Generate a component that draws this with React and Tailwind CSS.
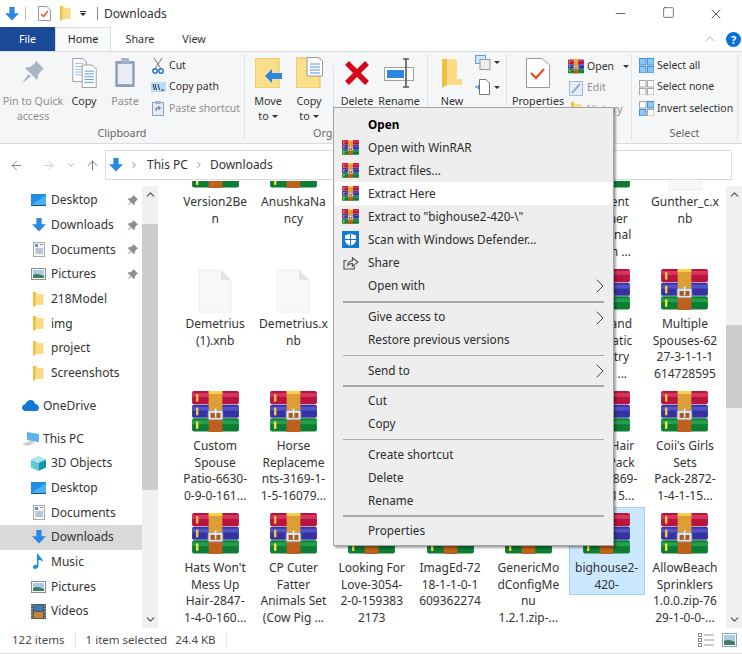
import { ChevronDown, ChevronRight, ChevronUp, ArrowLeft, ArrowRight, ArrowUp, Minus, Square, X } from 'lucide-react';

const RarIcon = ({ className }) => (
  <svg viewBox="0 0 48 42" className={className}>
    <rect x="0" y="0" width="48" height="13.5" rx="2" fill="#b9143f" />
    <rect x="0" y="14" width="48" height="13.5" rx="2" fill="#35339f" />
    <rect x="0" y="28" width="48" height="13.5" rx="2" fill="#0c7d33" />
    <rect x="0" y="2" width="48" height="4" fill="#e0446a" opacity=".7" />
    <rect x="0" y="16" width="48" height="4" fill="#5f5fdc" opacity=".7" />
    <rect x="0" y="30" width="48" height="4" fill="#2fae56" opacity=".7" />
    <rect x="4" y="3" width="2.5" height="8" rx="1" fill="#f5c542" />
    <rect x="4" y="17" width="2.5" height="8" rx="1" fill="#f5c542" />
    <rect x="4" y="31" width="2.5" height="8" rx="1" fill="#f5e042" />
    <rect x="17" y="0" width="14" height="21" fill="#dd9f35" />
    <rect x="17" y="0" width="14" height="3" fill="#f3d24e" />
    <rect x="17" y="21" width="14" height="21" fill="#bf601c" />
    <rect x="16.5" y="20" width="15" height="9.5" rx="1.5" fill="#dfe3e8" stroke="#9aa0a8" strokeWidth=".8" />
    <rect x="19" y="22.5" width="10" height="5" fill="#a85a1a" />
    <rect x="23.3" y="18" width="1.6" height="9" fill="#f2f2f2" />
  </svg>
);

const BlankDoc = () => (
  <svg viewBox="0 0 34 44" className="w-[34px] h-[44px]">
    <path d="M1 1H23L33 11V43H1Z" fill="#f8f8f8" stroke="#eeeeee" />
    <path d="M23 1V11H33Z" fill="#e3e3e3" />
  </svg>
);

const DownArrow = ({ className }) => (
  <svg viewBox="0 0 16 16" className={className}>
    <path d="M5 0H11V7H16L8 15.5L0 7H5Z" fill="#2b87e3" />
  </svg>
);

const SideFolder = ({ className }) => (
  <svg viewBox="0 0 11 15" className={className}>
    <path d="M0 0H3L5 2H10.5V13H3L0 15Z" fill="#fbdc86" />
    <path d="M0 0H2.5V13.5L0 15Z" fill="#efbe45" />
  </svg>
);

const PinSmall = () => (
  <svg viewBox="0 0 12 12" className="w-[11px] h-[11px]">
    <path d="M7 0L12 5L10.5 5.8L8.5 8.5V10.5L7.5 11L1 4.5L1.5 3.5H3.5L6.2 1.5ZM3.5 7.5L0 12L4.5 8.5Z" fill="#8f8f8f" />
  </svg>
);

const NavIcon = ({ kind }) => {
  if (kind === 'desktop')
    return (
      <svg viewBox="0 0 15 12" className="w-[15px] h-[12px]">
        <rect width="15" height="11" fill="#1b8fe8" />
        <path d="M0 11L15 1V11Z" fill="#49aef2" />
        <rect y="11" width="15" height="1" fill="#0d4f91" />
      </svg>
    );
  if (kind === 'downloads') return <DownArrow className="w-[14px] h-[14px]" />;
  if (kind === 'documents')
    return (
      <svg viewBox="0 0 12 15" className="w-[12px] h-[15px]">
        <rect x=".5" y=".5" width="11" height="14" fill="#f5f5f5" stroke="#a8a8a8" />
        <path d="M2.5 4H5M7 2.5H10M2.5 7H10M2.5 9H10M2.5 11H10" stroke="#7d95b0" />
        <rect x="2" y="2" width="3" height="3" fill="#4a9ad8" />
      </svg>
    );
  if (kind === 'pictures')
    return (
      <svg viewBox="0 0 15 12" className="w-[15px] h-[12px]">
        <rect x=".5" y=".5" width="14" height="11" fill="#fff" stroke="#8e8e8e" />
        <rect x="2" y="2" width="11" height="8" fill="#a9cde8" />
        <path d="M2 10V7C5 5 9 6 13 8V10Z" fill="#3f7d5c" />
      </svg>
    );
  if (kind === 'folder') return <SideFolder className="w-[11px] h-[15px]" />;
  if (kind === 'cloud')
    return (
      <svg viewBox="0 0 17 11" className="w-[17px] h-[11px]">
        <path d="M4 11C1 11 0 9 0 7.5C0 5.5 2 4.5 3 4.5C4 1.5 6.5 0 8.5 0C11 0 13 2 13 4C15.5 4 17 6 17 8C17 10 15.5 11 14 11Z" fill="#0f78d4" />
      </svg>
    );
  if (kind === 'pc')
    return (
      <svg viewBox="0 0 18 14" className="w-[18px] h-[14px]">
        <path d="M5 0L17 2V10L5 8Z" fill="#5fb1e8" />
        <path d="M0 12L9 9L14 10L6 14Z" fill="#c9ced4" />
      </svg>
    );
  if (kind === 'cube')
    return (
      <svg viewBox="0 0 15 15" className="w-[15px] h-[15px]">
        <path d="M7.5 0L15 3.5L7.5 7L0 3.5Z" fill="#a5e6ef" />
        <path d="M0 3.5L7.5 7V15L0 11.5Z" fill="#5cc9d8" />
        <path d="M15 3.5L7.5 7V15L15 11.5Z" fill="#1597ab" />
      </svg>
    );
  if (kind === 'music')
    return (
      <svg viewBox="0 0 11 15" className="w-[11px] h-[15px]">
        <path d="M4 0H5.5C6 3 10 4 10 8C9 6.5 7 6 5.5 6V12C5.5 14 3.5 15 2 15C.5 15 0 14 0 13C0 11.5 2 10.5 4 11Z" fill="#1b8fe8" />
      </svg>
    );
  return (
    <svg viewBox="0 0 15 15" className="w-[15px] h-[15px]">
      <rect width="15" height="15" fill="#555" />
      <rect x="3" y="1" width="9" height="6" fill="#3d77b5" />
      <rect x="3" y="8" width="9" height="6" fill="#c8862e" />
      <path d="M1 1V14M14 1V14" stroke="#ddd" strokeDasharray="1.5 1.5" />
    </svg>
  );
};

const QUICK = [
  { icon: 'desktop', label: 'Desktop', pin: true },
  { icon: 'downloads', label: 'Downloads', pin: true },
  { icon: 'documents', label: 'Documents', pin: true },
  { icon: 'pictures', label: 'Pictures', pin: true },
  { icon: 'folder', label: '218Model' },
  { icon: 'folder', label: 'img' },
  { icon: 'folder', label: 'project' },
  { icon: 'folder', label: 'Screenshots' },
];

const PC = [
  { icon: 'cube', label: '3D Objects' },
  { icon: 'desktop', label: 'Desktop' },
  { icon: 'documents', label: 'Documents' },
  { icon: 'downloads', label: 'Downloads', active: true },
  { icon: 'music', label: 'Music' },
  { icon: 'pictures', label: 'Pictures' },
  { icon: 'video', label: 'Videos' },
];

const NavRow = ({ icon, label, pin, active }) => (
  <div className={`relative flex items-center h-[24.7px] pl-[31px] ${active ? 'bg-[#d9d9d9]' : ''}`}>
    <span className="w-[15px] flex justify-center shrink-0"><NavIcon kind={icon} /></span>
    <span className="ml-[5px]">{label}</span>
    {pin && <span className="absolute left-[127px] top-[7px]"><PinSmall /></span>}
  </div>
);

const Scrollbar = ({ thumbTop, thumbHeight, className }) => (
  <div className={`relative w-[16px] bg-[#f0f0f0] flex flex-col justify-between items-center py-[2px] text-[#555] ${className}`}>
    <ChevronUp size={13} strokeWidth={2.2} />
    <div className="absolute left-0 w-[16px] bg-[#cdcdcd]" style={{ top: thumbTop, height: thumbHeight }} />
    <ChevronDown size={13} strokeWidth={2.2} />
  </div>
);

const FILES = [
  { kind: 'rar', lines: ['Version2Be', 'n'] },
  { kind: 'rar', lines: ['AnushkaNa', 'ncy'] },
  { kind: 'rar', lines: [] },
  { kind: 'rar', lines: [] },
  { kind: 'rar', lines: [] },
  { kind: 'rar', lines: ['Content', 'Partner', 'Personal', 'Ocean ...'] },
  { kind: 'doc', lines: ['Gunther_c.x', 'nb'] },
  { kind: 'doc', lines: ['Demetrius', '(1).xnb'] },
  { kind: 'doc', lines: ['Demetrius.x', 'nb'] },
  { kind: 'rar', lines: [] },
  { kind: 'rar', lines: [] },
  { kind: 'rar', lines: [] },
  { kind: 'rar', lines: ['Husband', 'Dramatic', 'Country', 'Lore  ...'] },
  { kind: 'rar', lines: ['Multiple', 'Spouses-62', '27-3-1-1-1', '614728595'] },
  { kind: 'rar', lines: ['Custom', 'Spouse', 'Patio-6630-', '0-9-0-161...'] },
  { kind: 'rar', lines: ['Horse', 'Replaceme', 'nts-3169-1-', '1-5-16079...'] },
  { kind: 'rar', lines: [] },
  { kind: 'rar', lines: [] },
  { kind: 'rar', lines: [] },
  { kind: 'rar', lines: ['Long Hair', 'Style Pack', 'Pack-2869-', '1-4-0-15...'] },
  { kind: 'rar', lines: ["Coii's Girls", 'Sets', 'Pack-2872-', '1-4-1-15...'] },
  { kind: 'rar', lines: ["Hats Won't", 'Mess Up', 'Hair-2847-', '1-4-0-160...'] },
  { kind: 'rar', lines: ['CP Cuter', 'Fatter', 'Animals Set', '(Cow Pig ...'] },
  { kind: 'rar', lines: ['Looking For', 'Love-3054-', '2-0-159383', '2173'] },
  { kind: 'rar', lines: ['ImagEd-72', '18-1-1-0-1', '609362274'] },
  { kind: 'rar', lines: ['GenericMo', 'dConfigMe', 'nu', '1.2.1.zip-...'] },
  { kind: 'rar', lines: ['bighouse2-', '420-'], selected: true },
  { kind: 'rar', lines: ['AllowBeach', 'Sprinklers', '1.0.0.zip-76', '29-1-0-0-...'] },
];

const FileTile = ({ kind, lines, selected }) => (
  <div className="h-[122px] pt-[1px]">
    <div className={`w-[76px] mx-auto text-center leading-[16.5px] border ${selected ? 'h-[88px] bg-[#cce8ff] border-[#99d1ff]' : 'border-transparent'}`}>
      <div className="h-[52px] pt-[5px] flex justify-center">
        {kind === 'rar' ? <RarIcon className="w-[47px] h-[41px]" /> : <BlankDoc />}
      </div>
      {lines.map((line, i) => <div key={i} className="whitespace-pre">{line}</div>)}
    </div>
  </div>
);

const Big = ({ w, label, sub, dim, icon }) => (
  <div className={`shrink-0 flex flex-col items-center text-center leading-[14.5px] ${dim ? 'text-[#8f8f8f]' : ''}`} style={{ width: w }}>
    <div className="h-[32px] mt-[2px] mb-[6px] flex items-end justify-center">{icon}</div>
    <div className="whitespace-nowrap">{label}</div>
    {sub && <div className="whitespace-nowrap">{sub}</div>}
  </div>
);

const Small = ({ icon, label, dim, caret }) => (
  <div className={`flex items-center h-[21.5px] whitespace-nowrap text-[10.5px] ${dim ? 'text-[#8f8f8f]' : ''}`}>
    <span className="w-[16px] h-[16px] flex items-center justify-center shrink-0">{icon}</span>
    <span className="ml-[3px]">{label}</span>
    {caret && <span className="ml-[9px] border-x-[3px] border-t-[3px] border-x-transparent border-t-[#333]" />}
  </div>
);

const Group = ({ w, label, children }) => (
  <div className="shrink-0 flex flex-col border-r border-[#e2e4e7] my-[2px]" style={{ width: w }}>
    <div className="flex h-[72px]">{children}</div>
    <div className="text-center text-[#666] leading-[15px]">{label}</div>
  </div>
);

const Caret = () => <span className="inline-block align-middle ml-[3px] border-x-[3px] border-t-[3px] border-x-transparent border-t-[#333]" />;

const DocsIcon = () => (
  <svg viewBox="0 0 26 32" className="w-[25px] h-[30px]">
    <path d="M.5 .5H11L15 4V25H.5Z" fill="#fff" stroke="#9a9a9a" />
    <path d="M3 6H12M3 9H12M3 12H12M3 15H12M3 18H12" stroke="#8db9ee" />
    <path d="M10.5 7.5H21L25.5 11.5V31.5H10.5Z" fill="#fff" stroke="#9a9a9a" />
    <path d="M13 14H23M13 17H23M13 20H23M13 23H23M13 26H23" stroke="#4f94e8" />
  </svg>
);

const BoardIcon = () => (
  <svg viewBox="0 0 22 31" className="w-[22px] h-[30px]">
    <rect x="1" y="3" width="20" height="27" rx="1" fill="#8d9dbb" />
    <rect x="3.5" y="6" width="15" height="21" fill="#e9eef6" />
    <rect x="7" y="0" width="8" height="5" rx="1" fill="#a9b4c8" />
  </svg>
);

const SelectIcon = ({ on }) => (
  <svg viewBox="0 0 15 15" className="w-[15px] h-[15px]">
    {[[0, 0], [8, 0], [0, 8], [8, 8]].map(([x, y], i) => (
      <rect key={i} x={x + .5} y={y + .5} width="6.5" height="6.5" fill={on[i] ? '#8cc6f2' : '#fff'} stroke={on[i] ? '#3f93d9' : '#a5a5a5'} />
    ))}
  </svg>
);

const MenuItem = ({ icon, label, bold, arrow, hot }) => (
  <div className={`relative flex items-center h-[23px] pl-[7px] ${hot ? 'bg-white' : ''} ${bold ? 'font-bold text-black' : ''}`}>
    <span className="w-[17px] h-[17px] mr-[9px] flex items-center justify-center shrink-0">{icon}</span>
    <span>{label}</span>
    {arrow && <ChevronRight size={24} strokeWidth={1} className="absolute right-0 top-0 text-[#444]" />}
  </div>
);

const Sep = () => <div className="h-[7.5px] flex items-center px-[8px]"><div className="w-full h-[1.5px] bg-[#a8a8a8]" /></div>;

const rar = <RarIcon className="w-[17px] h-[15px]" />;

const ContextMenu = () => (
  <div className="absolute left-[333px] top-[107px] w-[281px] h-[439px] pt-[5px] px-[1px] bg-[#eeeeee] border border-[#a3a3a3] shadow-[2px_2px_2px_rgba(0,0,0,0.35)] text-[11.75px] text-[#2b2b2b] font-['Noto_Sans',sans-serif]">
    <MenuItem label="Open" bold />
    <MenuItem icon={rar} label="Open with WinRAR" />
    <MenuItem icon={rar} label="Extract files..." />
    <MenuItem icon={rar} label="Extract Here" hot />
    <MenuItem icon={rar} label={'Extract to "bighouse2-420-\\"'} />
    <MenuItem
      icon={
        <svg viewBox="0 0 17 17" className="w-[17px] h-[17px]">
          <rect width="17" height="17" fill="#0f78d4" />
          <path d="M8.5 2.5L14 4.5V9C14 12 11 14 8.5 15C6 14 3 12 3 9V4.5Z" fill="#fff" />
          <path d="M8.5 2.5V15M3 8.5H14" stroke="#0f78d4" />
        </svg>
      }
      label="Scan with Windows Defender..."
    />
    <MenuItem
      icon={
        <svg viewBox="0 0 17 15" className="w-[16px] h-[14px]" fill="none" stroke="#444" strokeWidth="1.1">
          <path d="M4 5H1V14H12V11" />
          <path d="M5 10C5 7 8 5 10 5V2L16 6.5L10 11V8C8 8 6 8.5 5 10Z" />
        </svg>
      }
      label="Share"
    />
    <MenuItem label="Open with" arrow />
    <div className="h-px" />
    <Sep />
    <MenuItem label="Give access to" arrow />
    <MenuItem label="Restore previous versions" />
    <Sep />
    <MenuItem label="Send to" arrow />
    <Sep />
    <MenuItem label="Cut" />
    <MenuItem label="Copy" />
    <Sep />
    <MenuItem label="Create shortcut" />
    <MenuItem label="Delete" />
    <MenuItem label="Rename" />
    <Sep />
    <MenuItem label="Properties" />
  </div>
);

export default function App() {
  return (
    <div className="relative w-[742px] h-[654px] overflow-hidden bg-white flex flex-col text-[12px] text-[#333] font-['Noto_Sans',sans-serif]">
      {/* Title bar */}
      <div className="h-[27px] flex items-center shrink-0">
        <DownArrow className="ml-[5px] w-[14px] h-[14px]" />
        <div className="ml-[6px] w-px h-[13px] bg-[#bbb]" />
        <svg viewBox="0 0 13 15" className="ml-[12px] w-[13px] h-[15px]">
          <path d="M.5 .5H9L12.5 4V14.5H.5Z" fill="#fff" stroke="#999" />
          <path d="M3 8L5.5 10.5L10 5" fill="none" stroke="#e0562a" strokeWidth="1.5" />
        </svg>
        <SideFolder className="ml-[9px] w-[11px] h-[15px]" />
        <div className="ml-[9px] flex flex-col items-center gap-[1px]">
          <div className="w-[6px] h-px bg-[#333]" />
          <div className="border-x-[3px] border-t-[3px] border-x-transparent border-t-[#333]" />
        </div>
        <div className="ml-[11px] w-px h-[13px] bg-[#888]" />
        <div className="ml-[6px]">Downloads</div>
        <div className="ml-auto flex text-[#333]">
          <div className="w-[48px] flex justify-center"><Minus size={15} strokeWidth={1.2} /></div>
          <div className="w-[48px] flex justify-center"><Square size={13} strokeWidth={1.2} /></div>
          <div className="w-[48px] mr-[2px] flex justify-center"><X size={16} strokeWidth={1.2} /></div>
        </div>
      </div>

      {/* Tabs */}
      <div className="relative h-[24px] flex items-stretch shrink-0 text-[10.75px]">
        <div className="w-[55px] bg-[#1a4a96] text-white flex items-center justify-center">File</div>
        <div className="w-[56px] flex items-center justify-center border-x border-t border-[#dadbdc] text-[#222] relative z-10 bg-[#f9fafa]">Home</div>
        <div className="w-[58px] flex items-center justify-center">Share</div>
        <div className="w-[50px] flex items-center justify-center">View</div>
        <div className="ml-auto flex items-center mr-[1px]">
          <ChevronUp size={16} strokeWidth={1} className="text-[#999] mr-[8px]" />
          <div className="w-[15px] h-[15px] rounded-full bg-[#0a6fd6] text-white font-bold text-[11px] leading-[15px] text-center">?</div>
        </div>
      </div>

      {/* Ribbon */}
      <div className="h-[93px] bg-[#f5f6f7] border-y border-[#dadbdc] flex shrink-0 text-[10.75px]">
        <Group w={245} label="Clipboard">
          <div className="w-[5px] shrink-0" />
          <Big w={56} dim label="Pin to Quick" sub="access" icon={
            <svg viewBox="0 0 22 22" className="w-[22px] h-[22px] mb-[5px]">
              <path d="M14 0L22 8L19.5 9.5L16 14V17.5L14.5 18.5L3.5 7.5L4.5 6H8L12.5 2.5ZM6.5 13L0 22L9 15.5Z" fill="#aab5c3" />
            </svg>
          } />
          <Big w={46} label="Copy" icon={<DocsIcon />} />
          <Big w={36} dim label="Paste" icon={<BoardIcon />} />
          <div className="ml-[7px] pt-[1px]">
            <Small label="Cut" icon={
              <svg viewBox="0 0 12 16" className="w-[12px] h-[16px]" fill="none">
                <path d="M2 0L8.5 10M10 0L3.5 10" stroke="#777" />
                <circle cx="3" cy="13" r="2.2" stroke="#1f6fc4" strokeWidth="1.4" />
                <circle cx="9" cy="13" r="2.2" stroke="#1f6fc4" strokeWidth="1.4" />
              </svg>
            } />
            <Small label="Copy path" icon={
              <svg viewBox="0 0 15 10" className="w-[15px] h-[10px]">
                <rect width="15" height="10" fill="#bcdcf5" />
                <path d="M2 2L3.5 8M4 2L5.5 8M7 2L8.5 8M10 8H13" stroke="#334" />
              </svg>
            } />
            <Small dim label="Paste shortcut" icon={
              <svg viewBox="0 0 12 15" className="w-[12px] h-[15px]">
                <rect x=".5" y="1.5" width="11" height="13" fill="#e4ebf4" stroke="#8ea0bd" />
                <rect x="3.5" y="0" width="5" height="3" fill="#9fb0c8" />
                <path d="M4 10V7H8M6 5L8.5 7L6 9" fill="none" stroke="#5b6f8c" />
              </svg>
            } />
          </div>
        </Group>
        <Group w={183} label="Organize">
          <Big w={46} label="Move" sub={<>to<Caret /></>} icon={
            <svg viewBox="0 0 27 30" className="w-[27px] h-[30px]">
              <rect x="0" y="0" width="24" height="30" fill="#fcdf8c" stroke="#eabc4a" />
              <path d="M27 15H17V11L10 18L17 25V21H27Z" fill="#2b87e3" />
            </svg>
          } />
          <Big w={36} label="Copy" sub={<>to<Caret /></>} icon={
            <svg viewBox="0 0 27 31" className="w-[27px] h-[31px]">
              <rect x="0" y="1" width="24" height="30" fill="#fcdf8c" stroke="#eabc4a" />
              <path d="M11 .5H22L26.5 4V19H11Z" fill="#fff" stroke="#999" />
              <path d="M14 7H24M14 10H24M14 13H24M14 16H24" stroke="#4f94e8" />
            </svg>
          } />
          <div className="ml-[6px] mr-[3px] mt-[12px] mb-[4px] w-px bg-[#e2e4e7] shrink-0" />
          <Big w={40} label="Delete" icon={
            <svg viewBox="0 0 26 26" className="w-[26px] h-[26px] mb-[2px]">
              <path d="M3 3L23 23M23 3L3 23" stroke="#d3071c" strokeWidth="5.5" />
            </svg>
          } />
          <Big w={44} label="Rename" icon={
            <svg viewBox="0 0 30 30" className="w-[30px] h-[30px]" fill="none">
              <rect x=".5" y="9.5" width="29" height="13" fill="#fff" stroke="#a0a0a0" />
              <rect x="3" y="12" width="17" height="8" fill="#2b87e3" />
              <path d="M19 1H25M19 29H25M22 1V29" stroke="#555" strokeWidth="1.6" />
            </svg>
          } />
        </Group>
        <Group w={79} label="">
          <Big w={48} label="New" icon={
            <svg viewBox="0 0 20 29" className="w-[20px] h-[29px]">
              <path d="M0 0H13L15 2V20H20V26L5 26L0 29Z" fill="#fcdc82" />
              <path d="M0 0H5V26L0 29Z" fill="#efbe45" />
            </svg>
          } />
          <div className="ml-[-1px]">
            <div className="h-[16px] flex items-center">
              <svg viewBox="0 0 16 15" className="w-[16px] h-[15px]">
                <rect x=".5" y=".5" width="10" height="8" fill="#cfe4f6" stroke="#6b9ccc" />
                <rect x="5" y="4.5" width="10" height="10" fill="#eee" stroke="#999" />
              </svg>
              <Caret />
            </div>
            <div className="mt-[9px] h-[16px] flex items-center">
              <svg viewBox="0 0 16 16" className="w-[16px] h-[16px]">
                <path d="M4.5 .5H11L14.5 4V15.5H4.5Z" fill="#fff" stroke="#777" />
                <path d="M0 8H5M3 6L5 8L3 10" fill="none" stroke="#1f6fc4" />
              </svg>
              <Caret />
            </div>
          </div>
        </Group>
        <Group w={125} label="">
          <Big w={62} label="Properties" icon={
            <svg viewBox="0 0 24 30" className="w-[24px] h-[30px]">
              <path d="M.5 .5H16L23.5 7V29.5H.5Z" fill="#fff" stroke="#9a9a9a" />
              <path d="M5 15L10 20L18 11" fill="none" stroke="#e0562a" strokeWidth="2.4" />
            </svg>
          } />
          <div className="pt-[2px] ml-[-1px]">
            <Small label="Open" caret icon={rar} />
            <Small dim label="Edit" icon={
              <svg viewBox="0 0 14 15" className="w-[14px] h-[15px]">
                <rect x=".5" y=".5" width="13" height="14" fill="#e6edf5" stroke="#aab8c8" />
                <path d="M3 12L11 3" stroke="#8fb0d6" strokeWidth="2" />
              </svg>
            } />
            <Small dim label="History" icon={<SideFolder className="w-[11px] h-[15px]" />} />
          </div>
        </Group>
        <Group w={106} label="Select">
          <div className="ml-[6px] pt-[1px]">
            <Small label="Select all" icon={<SelectIcon on={[1, 1, 1, 1]} />} />
            <Small label="Select none" icon={<SelectIcon on={[0, 0, 0, 0]} />} />
            <Small label="Invert selection" icon={<SelectIcon on={[0, 1, 1, 0]} />} />
          </div>
        </Group>
      </div>

      {/* Address bar */}
      <div className="h-[37px] flex items-center shrink-0 pt-[6px] pb-[1px]">
        <ArrowLeft size={15} strokeWidth={1.4} className="ml-[9px] text-[#777]" />
        <ArrowRight size={15} strokeWidth={1.4} className="ml-[17px] text-[#c8c8c8]" />
        <ChevronDown size={10} strokeWidth={1.4} className="ml-[10px] text-[#777]" />
        <ArrowUp size={15} strokeWidth={1.4} className="ml-[9px] text-[#666]" />
        <div className="ml-[5px] w-[627px] h-full border border-[#dadbdc] flex items-center pl-[3px]">
          <DownArrow className="w-[14px] h-[14px]" />
          <ChevronRight size={10} className="ml-[6px] text-[#777]" />
          <span className="ml-[8px]">This PC</span>
          <ChevronRight size={10} className="ml-[6px] text-[#777]" />
          <span className="ml-[6px]">Downloads</span>
        </div>
      </div>

      {/* Body */}
      <div className="flex-1 min-h-0 flex">
        <div className="w-[142px] shrink-0 overflow-hidden pt-[7px]">
          {QUICK.map((row, i) => <NavRow key={i} {...row} />)}
          <div className="flex items-center h-[24.7px] mt-[8px] pl-[22px]"><NavIcon kind="cloud" /><span className="ml-[4px]">OneDrive</span></div>
          <div className="flex items-center h-[24.7px] mt-[8px] pl-[22px]"><NavIcon kind="pc" /><span className="ml-[3px]">This PC</span></div>
          {PC.map((row, i) => <NavRow key={i} {...row} />)}
        </div>
        <Scrollbar className="mt-[5px]" thumbTop={38} thumbHeight={266} />
        <div className="flex-1 min-w-0 overflow-hidden">
          <div className="-mt-[41px] ml-[18px] grid grid-cols-[repeat(7,78.3px)]">
            {FILES.map((f, i) => <FileTile key={i} {...f} />)}
          </div>
        </div>
        <Scrollbar className="mt-[5px]" thumbTop={139} thumbHeight={83} />
      </div>

      {/* Status bar */}
      <div className="h-[26px] shrink-0 flex items-center border-b border-[#dcdcdc] pl-[12px] pb-[1px] text-[11.5px] text-[#4a4a4a]">
        <span>122 items</span>
        <span className="ml-[10px] w-px h-[14px] bg-[#e4e4e4]" />
        <span className="ml-[10px]">1 item selected</span>
        <span className="ml-[8px]">24.4 KB</span>
        <span className="ml-[10px] w-px h-[14px] bg-[#e4e4e4]" />
        <div className="ml-auto mr-[5px] flex items-center gap-[8px]">
          <svg viewBox="0 0 16 14" className="w-[16px] h-[14px]">
            <rect x=".5" y=".5" width="3" height="3" fill="#fff" stroke="#888" />
            <rect x=".5" y="5.5" width="3" height="3" fill="#fff" stroke="#888" />
            <rect x=".5" y="10.5" width="3" height="3" fill="#fff" stroke="#888" />
            <path d="M6 2H16M6 7H16M6 12H16" stroke="#999" />
          </svg>
          <svg viewBox="0 0 15 14" className="w-[15px] h-[14px]">
            <rect x=".5" y=".5" width="14" height="13" fill="#fff" stroke="#7ca9d0" />
            <rect x="2" y="2" width="11" height="10" fill="#a9cde8" />
            <path d="M2 12V8C6 6 9 7 13 9V12Z" fill="#3f7d5c" />
          </svg>
        </div>
      </div>

      <ContextMenu />
    </div>
  );
}
